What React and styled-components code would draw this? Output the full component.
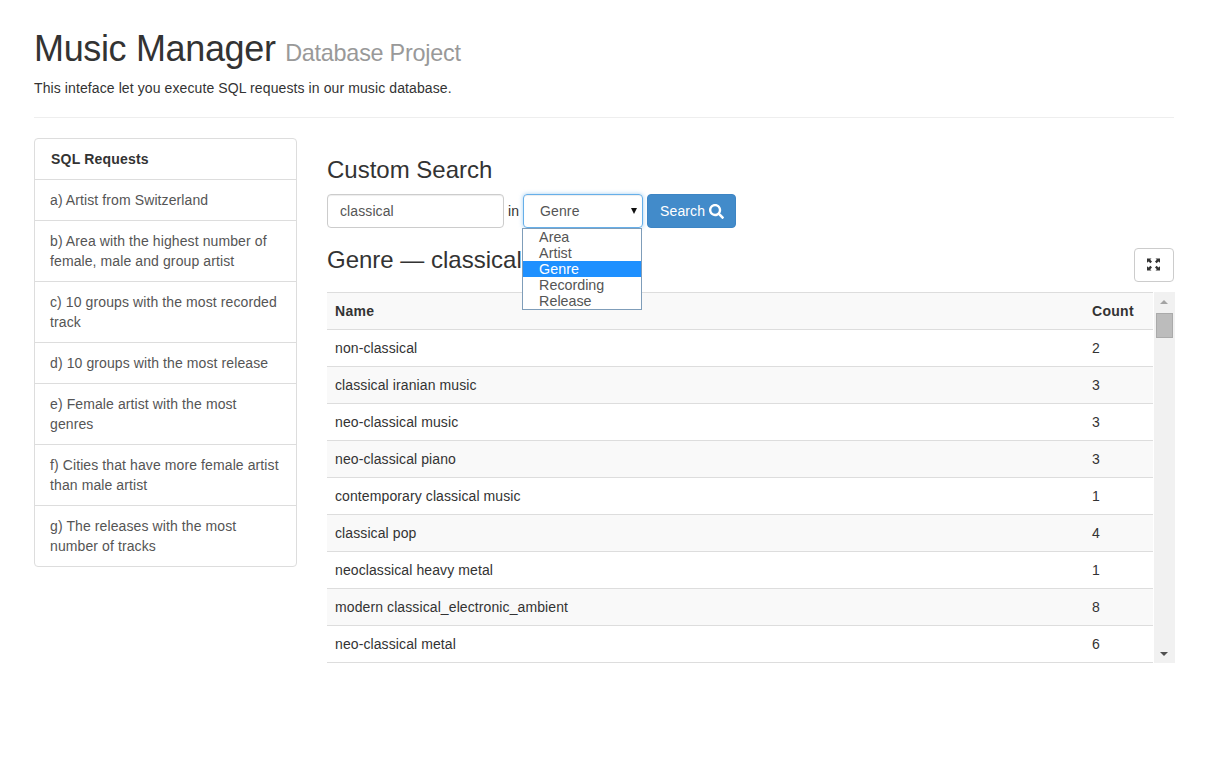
import React from "react";
import styled, { createGlobalStyle } from "styled-components";
import { FaSearch } from "react-icons/fa";

const GlobalStyle = createGlobalStyle`
  * { box-sizing: border-box; }
  html, body { margin: 0; padding: 0; background: #fff; }
  body {
    font-family: "Liberation Sans", Arial, sans-serif;
    font-size: 14px;
    line-height: 20px;
    letter-spacing: 0.1px;
    color: #333;
  }
`;

const Page = styled.div`
  width: 1210px;
  min-height: 777px;
  padding: 29px 36px 0 34px;
`;

const Header = styled.header`
  padding-bottom: 19px;
  border-bottom: 1px solid #eee;
  margin-bottom: 20px;
`;

const Title = styled.h1`
  margin: 0 0 5px;
  font-size: 36px;
  line-height: 40px;
  font-weight: 400;
  letter-spacing: -0.35px;
  color: #333;
`;

const Subtitle = styled.small`
  font-size: 23.4px;
  color: #999;
  font-weight: 400;
  letter-spacing: -0.25px;
`;

const Lead = styled.p`
  margin: 0;
  font-size: 14px;
  line-height: 20px;
`;

const Columns = styled.div`
  display: flex;
  align-items: flex-start;
  gap: 30px;
`;

const Sidebar = styled.aside`
  width: 263px;
  flex: none;
  border: 1px solid #ddd;
  border-radius: 4px;
`;

const SidebarTitle = styled.div`
  padding: 10px 16px;
  height: 40px;
  font-weight: 700;
  font-size: 14px;
  letter-spacing: 0.2px;
  color: #333;
`;

const SidebarItem = styled.a`
  display: block;
  padding: 10px 15px;
  border-top: 1px solid #ddd;
  color: #555;
  font-size: 14px;
  line-height: 20px;
`;

const Main = styled.main`
  width: 848px;
  flex: none;
  padding-top: 19px;
`;

const Heading = styled.h3`
  margin: 0;
  font-size: 24px;
  line-height: 26px;
  font-weight: 400;
  letter-spacing: 0;
  color: #333;
`;

const SearchForm = styled.form`
  display: flex;
  align-items: center;
  margin-top: 11px;
  height: 34px;
`;

const TextInput = styled.input`
  width: 177px;
  height: 34px;
  padding: 6px 12px;
  border: 1px solid #ccc;
  border-radius: 4px;
  font: 14px/20px "Liberation Sans", Arial, sans-serif;
  letter-spacing: 0.1px;
  color: #555;
  box-shadow: inset 0 1px 1px rgba(0, 0, 0, 0.075);
  outline: none;
`;

const InLabel = styled.span`
  margin: 0 4px;
  color: #333;
`;

const SelectWrap = styled.div`
  position: relative;
  width: 120px;
  height: 34px;
  margin-right: 4px;
`;

const SelectBox = styled.div`
  display: flex;
  align-items: center;
  justify-content: space-between;
  height: 34px;
  padding: 0 5px 0 16px;
  border: 1px solid #66afe9;
  border-radius: 4px;
  color: #555;
  box-shadow: inset 0 1px 1px rgba(0, 0, 0, 0.075), 0 0 4px rgba(102, 175, 233, 0.6);
`;

const Caret = styled.span`
  width: 0;
  height: 0;
  border-left: 3.5px solid transparent;
  border-right: 3.5px solid transparent;
  border-top: 6px solid #111;
`;

const OptionList = styled.ul`
  position: absolute;
  top: 34px;
  left: -1px;
  width: 120px;
  height: 82px;
  margin: 0;
  padding: 0;
  list-style: none;
  background: #fff;
  border: 1px solid #7f9db9;
  z-index: 2;
`;

const Option = styled.li`
  height: 16px;
  padding-left: 16px;
  font-size: 14.3px;
  line-height: 16px;
  letter-spacing: 0;
  color: ${(p) => (p.$active ? "#fff" : "#555")};
  background: ${(p) => (p.$active ? "#1e90ff" : "transparent")};
`;

const SearchButton = styled.button`
  display: inline-flex;
  align-items: center;
  gap: 4px;
  height: 34px;
  width: 89px;
  padding: 0 0 0 12px;
  border: 1px solid #3d85c4;
  border-radius: 4px;
  background: #428bca;
  color: #fff;
  font: 14px/20px "Liberation Sans", Arial, sans-serif;
  letter-spacing: 0.1px;
`;

const ResultHeader = styled.div`
  display: flex;
  align-items: flex-start;
  justify-content: space-between;
  height: 64px;
  padding-top: 19px;
  padding-right: 1px;
`;

const ExpandButton = styled.button`
  display: flex;
  align-items: center;
  justify-content: center;
  width: 40px;
  height: 34px;
  margin-top: 1px;
  padding: 0 1px 2px 0;
  background: #fff;
  border: 1px solid #ccc;
  border-radius: 4px;
`;

const TableArea = styled.div`
  display: flex;
  justify-content: space-between;
  height: 371px;
  overflow: hidden;
`;

const Table = styled.table`
  width: 826px;
  height: 371px;
  table-layout: fixed;
  border-collapse: collapse;
`;

const HeadRow = styled.tr`
  height: 37px;
  background: #f9f9f9;
  border-top: 1px solid #ddd;
  border-bottom: 1px solid #ddd;
`;

const HeadCell = styled.th`
  padding: 0 8px;
  text-align: left;
  font-weight: 700;
  letter-spacing: 0.3px;
  width: ${(p) => p.$width || "auto"};
`;

const Row = styled.tr`
  height: 37px;
  background: ${(p) => (p.$striped ? "#f9f9f9" : "#fff")};
  border-bottom: 1px solid #ddd;
`;

const Cell = styled.td`
  padding: 0 8px;
`;

const Scrollbar = styled.div`
  position: relative;
  width: 21px;
  background: #f1f1f1;
  display: flex;
  flex-direction: column;
  align-items: center;
`;

const ScrollArrow = styled.span`
  position: absolute;
  left: 6px;
  width: 0;
  height: 0;
  border-left: 4px solid transparent;
  border-right: 4px solid transparent;
  ${(p) =>
    p.$down
      ? "bottom: 7px; border-top: 4px solid #505050;"
      : "top: 8px; border-bottom: 4px solid #a3a3a3;"}
`;

const ScrollThumb = styled.div`
  width: 17px;
  height: 25px;
  margin-top: 21px;
  background: #bcbcbc;
  border: 1px solid #aaa;
`;

const requests = [
  "a) Artist from Switzerland",
  "b) Area with the highest number of female, male and group artist",
  "c) 10 groups with the most recorded track",
  "d) 10 groups with the most release",
  "e) Female artist with the most genres",
  "f) Cities that have more female artist than male artist",
  "g) The releases with the most number of tracks",
];

const options = ["Area", "Artist", "Genre", "Recording", "Release"];

const results = [
  ["non-classical", 2],
  ["classical iranian music", 3],
  ["neo-classical music", 3],
  ["neo-classical piano", 3],
  ["contemporary classical music", 1],
  ["classical pop", 4],
  ["neoclassical heavy metal", 1],
  ["modern classical_electronic_ambient", 8],
  ["neo-classical metal", 6],
];

// glyphicon-fullscreen, four corner arrows
const FullscreenIcon = () => (
  <svg width="15" height="15" viewBox="0 0 15 15" fill="#333">
    <path d="M1 1.5h4.5L4.2 2.8 6 4.6 4.4 6.2 2.6 4.4 1 5.8z" />
    <path d="M14 1.5H9.5l1.3 1.3L9 4.6l1.6 1.6 1.8-1.8L14 5.8z" />
    <path d="M1 13.5H5.5l-1.3-1.3L6 10.4 4.4 8.8 2.6 10.6 1 9.2z" />
    <path d="M14 13.5H9.5l1.3-1.3L9 10.4l1.6-1.6 1.8 1.8L14 9.2z" />
  </svg>
);

export default function App() {
  return (
    <>
      <GlobalStyle />
      <Page>
        <Header>
          <Title>
            Music Manager <Subtitle>Database Project</Subtitle>
          </Title>
          <Lead>This inteface let you execute SQL requests in our music database.</Lead>
        </Header>
        <Columns>
          <Sidebar>
            <SidebarTitle>SQL Requests</SidebarTitle>
            {requests.map((r) => (
              <SidebarItem key={r}>{r}</SidebarItem>
            ))}
          </Sidebar>
          <Main>
            <Heading>Custom Search</Heading>
            <SearchForm onSubmit={(e) => e.preventDefault()}>
              <TextInput defaultValue="classical" />
              <InLabel>in</InLabel>
              <SelectWrap>
                <SelectBox>
                  Genre
                  <Caret />
                </SelectBox>
                <OptionList>
                  {options.map((o) => (
                    <Option key={o} $active={o === "Genre"}>
                      {o}
                    </Option>
                  ))}
                </OptionList>
              </SelectWrap>
              <SearchButton type="submit">
                Search <FaSearch size={15} />
              </SearchButton>
            </SearchForm>
            <ResultHeader>
              <Heading>Genre — classical</Heading>
              <ExpandButton type="button">
                <FullscreenIcon />
              </ExpandButton>
            </ResultHeader>
            <TableArea>
              <Table>
                <thead>
                  <HeadRow>
                    <HeadCell>Name</HeadCell>
                    <HeadCell $width="69px">Count</HeadCell>
                  </HeadRow>
                </thead>
                <tbody>
                  {results.map(([name, count], i) => (
                    <Row key={name} $striped={i % 2 === 1}>
                      <Cell>{name}</Cell>
                      <Cell>{count}</Cell>
                    </Row>
                  ))}
                </tbody>
              </Table>
              <Scrollbar>
                <ScrollArrow />
                <ScrollThumb />
                <ScrollArrow $down />
              </Scrollbar>
            </TableArea>
          </Main>
        </Columns>
      </Page>
    </>
  );
}
